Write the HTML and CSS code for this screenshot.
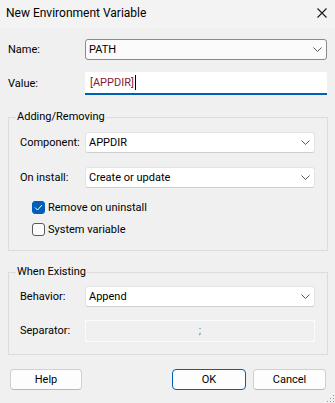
FILE: index.html
```html
<!DOCTYPE html>
<html>
<head>
<meta charset="utf-8">
<link rel="stylesheet" href="styles.css">
</head>
<body>
<div class="dialog">
  <div class="titlebar">
    <span class="title">New Environment Variable</span>
    <svg class="close" width="10" height="10" viewBox="0 0 10 10"><path d="M0.5 0.5 L9.5 9.5 M9.5 0.5 L0.5 9.5" stroke="#1a1a1a" stroke-width="1.1" fill="none"/></svg>
  </div>
  <div class="content">
    <div class="row row-name">
      <span class="label">Name:</span>
      <div class="combo combo-dark"><span>PATH</span><svg class="chev" width="9" height="5" viewBox="0 0 9 5"><path d="M0.5 0.5 L4.5 4.5 L8.5 0.5" stroke="#555" fill="none"/></svg></div>
    </div>
    <div class="row row-value">
      <span class="label">Value:</span>
      <div class="input"><span class="val">[APPDIR]</span><span class="caret"></span></div>
    </div>

    <fieldset class="group group1">
      <legend>Adding/Removing</legend>
      <div class="grow grow-first">
        <span class="glabel">Component:</span>
        <div class="combo"><span>APPDIR</span><svg class="chev" width="9" height="5" viewBox="0 0 9 5"><path d="M0.5 0.5 L4.5 4.5 L8.5 0.5" stroke="#555" fill="none"/></svg></div>
      </div>
      <div class="grow">
        <span class="glabel">On install:</span>
        <div class="combo"><span>Create or update</span><svg class="chev" width="9" height="5" viewBox="0 0 9 5"><path d="M0.5 0.5 L4.5 4.5 L8.5 0.5" stroke="#555" fill="none"/></svg></div>
      </div>
      <div class="check check-first">
        <span class="box checked"><svg width="9" height="7" viewBox="0 0 9 7"><path d="M1 3.5 L3.5 6 L8 1" stroke="#fff" stroke-width="1" fill="none"/></svg></span>
        <span>Remove on uninstall</span>
      </div>
      <div class="check">
        <span class="box"></span>
        <span>System variable</span>
      </div>
    </fieldset>

    <fieldset class="group group2">
      <legend>When Existing</legend>
      <div class="grow grow-first2">
        <span class="glabel">Behavior:</span>
        <div class="combo"><span>Append</span><svg class="chev" width="9" height="5" viewBox="0 0 9 5"><path d="M0.5 0.5 L4.5 4.5 L8.5 0.5" stroke="#555" fill="none"/></svg></div>
      </div>
      <div class="grow grow-sep">
        <span class="glabel disabled">Separator:</span>
        <div class="sepbox">;</div>
      </div>
    </fieldset>

    <div class="buttons">
      <button class="btn btn-help">Help</button>
      <div class="right">
        <button class="btn btn-ok">OK</button>
        <button class="btn btn-cancel">Cancel</button>
      </div>
    </div>
  </div>
  <div class="grip">
    <i></i><i></i><i></i><i></i><i></i><i></i>
  </div>
</div>
</body>
</html>
```

FILE: styles.css
```css
* { box-sizing: border-box; }
html, body {
  margin: 0;
  padding: 0;
  background: #f0f0f0;
}
body {
  font-family: Roboto, "Noto Sans", sans-serif;
  font-size: 11px;
  color: #000;
  width: 335px;
  height: 403px;
  overflow: hidden;
}
.dialog {
  position: relative;
  width: 335px;
  height: 403px;
  background: #f0f0f0;
}
.titlebar {
  height: 28px;
  background: #f3f3f4;
  display: flex;
  align-items: center;
  justify-content: space-between;
  padding: 0 8px 2px 6px;
}
.title {
  font-size: 12px;
  color: #000;
}
.row {
  display: flex;
  align-items: center;
}
.row-name { margin-top: 11px; height: 21px; }
.row-value { margin-top: 12px; height: 23px; }
.label {
  flex: none;
  width: 85px;
  padding-left: 8px;
}
.combo {
  flex: none;
  height: 21px;
  background: #fff;
  border: 1px solid #e3e3e3;
  border-bottom-color: #cfcfcf;
  border-radius: 3px;
  display: flex;
  align-items: center;
  justify-content: space-between;
  padding: 0 4px 0 3px;
  line-height: 1;
}
.row .combo {
  width: 242px;
}
.combo-dark {
  border: 1px solid #8a8a8a;
  background: #fbfbfb;
}
.chev { flex: none; }
.input {
  flex: none;
  width: 242px;
  height: 23px;
  background: #fff;
  border-bottom: 2px solid #005fb8;
  border-radius: 2px 2px 0 0;
  display: flex;
  align-items: center;
  padding: 0 4px 0 5px;
}
.val { color: #861c34; }
.caret {
  display: inline-block;
  width: 1px;
  height: 15px;
  background: #000;
  margin-left: 1px;
}
.group {
  margin: 0 0 0 8px;
  width: 319px;
  border: 1px solid #dcdcdc;
  border-radius: 0;
  padding: 0 12px 0 11px;
}
.group1 {
  margin-top: 15px;
  height: 141px;
}
.group2 {
  margin-top: 14px;
  height: 90px;
}
.group legend {
  padding: 0 1px;
  margin-left: -4px;
  line-height: 14px;
  height: 14px;
}
.grow {
  display: flex;
  align-items: center;
  height: 21px;
}
.glabel {
  flex: none;
  width: 65px;
}
.grow .combo { width: 230px; }
.grow-first { margin-top: 8px; }
.grow + .grow { margin-top: 14px; }
.grow-first2 { margin-top: 7px; }
.grow-sep { margin-top: 13px !important; }
.check {
  display: flex;
  align-items: center;
  padding-left: 12px;
  height: 13px;
}
.check-first { margin-top: 13px; }
.check + .check { margin-top: 9px; }
.box {
  flex: none;
  width: 13px;
  height: 13px;
  border: 1px solid #5a5a5a;
  border-radius: 3px;
  background: #fbfbfb;
  margin-right: 3px;
  display: flex;
  align-items: center;
  justify-content: center;
}
.box.checked {
  background: #005fb8;
  border-color: #005fb8;
}
.sepbox {
  flex: none;
  width: 230px;
  height: 22px;
  border: 1px solid #fbfbfb;
  background: #f0f0f0;
  color: #777;
  display: flex;
  align-items: center;
  justify-content: center;
}
.buttons {
  display: flex;
  justify-content: space-between;
  margin-top: 14px;
  padding: 0 9px 0 10px;
}
.right {
  display: flex;
  gap: 7px;
}
.btn {
  font-family: inherit;
  font-size: 11px;
  height: 21px;
  background: #fdfdfd;
  border: 1px solid #d0d0d0;
  border-bottom-color: #b8b8b8;
  border-radius: 4px;
  padding: 0;
  color: #000;
}
.btn-help { width: 72px; }
.btn-ok { width: 74px; border: 1px solid #005fb8; }
.btn-cancel { width: 73px; }
.grip {
  position: absolute;
  right: 1px;
  bottom: 1px;
  width: 8px;
  height: 8px;
}
.grip i {
  position: absolute;
  width: 1px;
  height: 1px;
  background: #999;
}
.grip i:nth-child(1) { right: 0; bottom: 0; }
.grip i:nth-child(2) { right: 3px; bottom: 0; }
.grip i:nth-child(3) { right: 6px; bottom: 0; }
.grip i:nth-child(4) { right: 0; bottom: 3px; }
.grip i:nth-child(5) { right: 3px; bottom: 3px; }
.grip i:nth-child(6) { right: 0; bottom: 6px; }
```
